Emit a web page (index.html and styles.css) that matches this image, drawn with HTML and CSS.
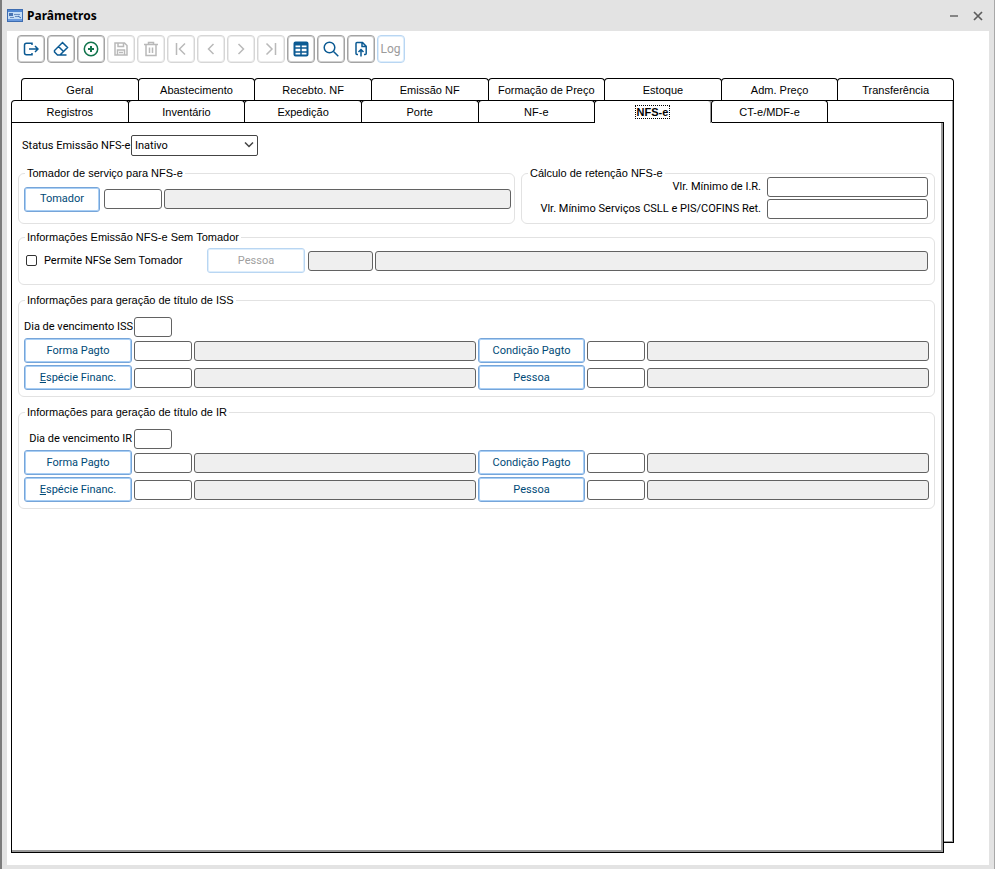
FILE: index.html
```html
<!DOCTYPE html>
<html lang="pt-BR">
<head>
<meta charset="utf-8">
<title>Parâmetros</title>
<link rel="stylesheet" href="styles.css">
</head>
<body>
<div class="window">
  <header class="titlebar">
    <svg class="app-icon" width="16" height="13" viewBox="0 0 16 13">
      <rect x="0.5" y="0.5" width="15" height="12" fill="#c4dcf5" stroke="#3d6cb0"/>
      <rect x="1" y="1" width="14" height="2" fill="#4f86d2"/>
      <rect x="2" y="4" width="4" height="3" fill="#4a74b2"/>
      <path d="M7 5.500h6M3 8.500h4M8 7.500h3" stroke="#6c8fc2"/>
      <path d="M11 7l3 2" stroke="#2f62ae"/>
      <path d="M1 11h14" stroke="#6a9ade" stroke-width="2"/>
    </svg>
    <h1>Parâmetros</h1>
    <button class="win-btn" type="button" aria-label="Minimizar"><svg width="10" height="10" viewBox="0 0 10 10"><path d="M1 5h8" stroke="#858585" stroke-width="2"/></svg></button>
    <button class="win-btn" type="button" aria-label="Fechar"><svg width="10" height="10" viewBox="0 0 10 10"><path d="M1 1l8 8M9 1l-8 8" stroke="#5c5c5c" stroke-width="1.700"/></svg></button>
  </header>
  <main class="client">
    <div class="toolbar" role="toolbar">
      <button type="button" class="tool" aria-label="Sair"><svg viewBox="0 0 16 16"><path d="M9 4V2.200H3.500Q1.500 2.200 1.500 4.200v7.600Q1.500 13.800 3.500 13.800H9V12M6 8h9M12 5l3 3-3 3"/></svg></button>
      <button type="button" class="tool" aria-label="Limpar"><svg viewBox="0 0 16 16"><path d="M9.500 1.500L14.500 6.500L7 14H4.500L1.500 11V9.500ZM5.500 5.500L10.500 10.500M7 14H13.500"/></svg></button>
      <button type="button" class="tool green" aria-label="Incluir"><svg viewBox="0 0 16 16"><circle cx="8" cy="8" r="6.700"/><path d="M8 5v6M5 8h6" stroke-width="2"/></svg></button>
      <button type="button" class="tool" disabled aria-label="Salvar"><svg viewBox="0 0 16 16"><path d="M2 2h9.500L14 4.500V14H2ZM5 2v3.500h5.500V2M4.500 14V9h7v5M6 11.500h4"/></svg></button>
      <button type="button" class="tool" disabled aria-label="Excluir"><svg viewBox="0 0 16 16"><path d="M1 3.500h14M5.500 3V1.500h5V3M3 4v10.500h10V4M6.500 6.500v5.500M9.500 6.500v5.500"/></svg></button>
      <button type="button" class="tool" disabled aria-label="Primeiro"><svg viewBox="0 0 16 16"><path d="M3.500 2v12M12 2.500L6.500 8l5.500 5.500"/></svg></button>
      <button type="button" class="tool" disabled aria-label="Anterior"><svg viewBox="0 0 16 16"><path d="M10.500 3L5.500 8l5 5"/></svg></button>
      <button type="button" class="tool" disabled aria-label="Próximo"><svg viewBox="0 0 16 16"><path d="M5.500 3l5 5-5 5"/></svg></button>
      <button type="button" class="tool" disabled aria-label="Último"><svg viewBox="0 0 16 16"><path d="M3.500 2.500L9 8l-5.500 5.500M12.500 2v12"/></svg></button>
      <button type="button" class="tool" aria-label="Grade"><svg viewBox="0 0 16 16"><rect x="1.500" y="1.500" width="13" height="13" rx="1" stroke-width="2"/><path d="M1 3h14" stroke-width="3"/><path d="M1 7h14M1 11h14M8 4v11"/></svg></button>
      <button type="button" class="tool" aria-label="Pesquisar"><svg viewBox="0 0 16 16"><circle cx="6.500" cy="6.500" r="5.300"/><path d="M10.500 10.500L15.300 15.300"/></svg></button>
      <button type="button" class="tool" aria-label="Exportar"><svg viewBox="0 0 16 16"><path d="M5 13.500H4Q3 13.500 3 12.500V2.500Q3 1.500 4 1.500H9.500L13.200 5.200V12.500Q13.200 13.500 12.200 13.500H11M9 1.500V5.500H13M8 15.500V9M5.500 11L8 8.500L10.500 11"/></svg></button>
      <button type="button" class="tool log" disabled>Log</button>
    </div>

    <div class="notebook">
      <div class="tabs tabs-back" role="tablist">
        <button type="button" role="tab">Geral</button>
        <button type="button" role="tab">Abastecimento</button>
        <button type="button" role="tab">Recebto. NF</button>
        <button type="button" role="tab">Emissão NF</button>
        <button type="button" role="tab">Formação de Preço</button>
        <button type="button" role="tab">Estoque</button>
        <button type="button" role="tab">Adm. Preço</button>
        <button type="button" role="tab">Transferência</button>
      </div>
      <div class="sheet-back"></div>
      <div class="tabs tabs-front" role="tablist">
        <button type="button" role="tab">Registros</button>
        <button type="button" role="tab">Inventário</button>
        <button type="button" role="tab">Expedição</button>
        <button type="button" role="tab">Porte</button>
        <button type="button" role="tab">NF-e</button>
        <button type="button" role="tab" class="selected" aria-selected="true"><span>NFS-e</span></button>
        <button type="button" role="tab">CT-e/MDF-e</button>
      </div>
      <form class="sheet">
        <div class="status">
          <label for="status">Status Emissão NFS-e</label>
          <span class="select-box">
            <select id="status"><option>Inativo</option></select>
            <svg width="10" height="6" viewBox="0 0 10 6"><path d="M1 0.500L5 4.500L9 0.500" fill="none" stroke="#444" stroke-width="1.500"/></svg>
          </span>
        </div>

        <div class="pair">
          <fieldset class="taker">
            <legend>Tomador de serviço para NFS-e</legend>
            <button type="button" class="action">Tomador</button>
            <input type="text" class="code" aria-label="Código do tomador">
            <input type="text" class="grow" readonly aria-label="Nome do tomador">
          </fieldset>
          <fieldset class="retention">
            <legend>Cálculo de retenção NFS-e</legend>
            <label for="ir">Vlr. Mínimo de I.R.</label><input type="text" id="ir">
            <label for="csll">Vlr. Mínimo Serviços CSLL e PIS/COFINS Ret.</label><input type="text" id="csll">
          </fieldset>
        </div>

        <fieldset class="no-taker">
          <legend>Informações Emissão NFS-e Sem Tomador</legend>
          <input type="checkbox" id="permite"><label for="permite">Permite NFSe Sem Tomador</label>
          <button type="button" class="action" disabled>Pessoa</button>
          <input type="text" class="code" readonly aria-label="Código da pessoa">
          <input type="text" class="grow" readonly aria-label="Nome da pessoa">
        </fieldset>

        <fieldset class="title-group">
          <legend>Informações para geração de título de ISS</legend>
          <div class="due"><label for="iss">Dia de vencimento ISS</label><input type="text" id="iss"></div>
          <div class="lookups">
            <button type="button" class="action">Forma Pagto</button><input type="text" aria-label="Forma"><input type="text" readonly aria-label="Descrição da forma">
            <button type="button" class="action">Condição Pagto</button><input type="text" aria-label="Condição"><input type="text" readonly aria-label="Descrição da condição">
            <button type="button" class="action"><u>E</u>spécie Financ.</button><input type="text" aria-label="Espécie"><input type="text" readonly aria-label="Descrição da espécie">
            <button type="button" class="action">Pessoa</button><input type="text" aria-label="Pessoa"><input type="text" readonly aria-label="Nome">
          </div>
        </fieldset>

        <fieldset class="title-group">
          <legend>Informações para geração de título de IR</legend>
          <div class="due"><label for="venc-ir">Dia de vencimento IR</label><input type="text" id="venc-ir"></div>
          <div class="lookups">
            <button type="button" class="action">Forma Pagto</button><input type="text" aria-label="Forma"><input type="text" readonly aria-label="Descrição da forma">
            <button type="button" class="action">Condição Pagto</button><input type="text" aria-label="Condição"><input type="text" readonly aria-label="Descrição da condição">
            <button type="button" class="action"><u>E</u>spécie Financ.</button><input type="text" aria-label="Espécie"><input type="text" readonly aria-label="Descrição da espécie">
            <button type="button" class="action">Pessoa</button><input type="text" aria-label="Pessoa"><input type="text" readonly aria-label="Nome">
          </div>
        </fieldset>
      </form>
    </div>
  </main>
</div>
</body>
</html>
```
FILE: styles.css
```css
* { box-sizing: border-box; }

body {
  margin: 0;
  color: #000;
  font: 11px/14px Roboto, "Liberation Sans", sans-serif;
}

button, input, select { font: inherit; color: inherit; margin: 0; }

.window {
  display: flex;
  flex-direction: column;
  min-height: 100vh;
  padding: 0 5px 4px;
  background: #e3e3e3;
  border-left: 2px solid #7c7c7c;
  border-right: 1px solid #a8a8a8;
}

/* Title bar */
.titlebar {
  display: flex;
  align-items: center;
  height: 31px;
  padding-right: 6px;
}
.titlebar h1 {
  flex: 1;
  margin: 0 0 0 4px;
  font: bold 12px/16px "Noto Sans", sans-serif;
}
.win-btn {
  display: grid;
  place-items: center end;
  width: 24px;
  height: 24px;
  padding: 0;
  border: 0;
  background: none;
}

.client {
  flex: 1;
  display: flex;
  flex-direction: column;
  padding: 4px 35px 12px 4px;
  background: #fff;
}

/* Toolbar */
.toolbar { display: flex; gap: 2px; padding-left: 6px; }
.tool {
  display: grid;
  place-items: center;
  width: 28px;
  height: 28px;
  padding: 0 1px 1px 0;
  background: #fff;
  border: 1px solid #a4a4a4;
  border-radius: 4px;
  box-shadow: inset 0 0 0 1px #d0d0d0;
  color: #0b5a93;
}
.tool svg {
  width: 16px;
  height: 16px;
  fill: none;
  stroke: currentColor;
  stroke-width: 1.5;
}
.tool.green { color: #11744c; }
.tool:disabled {
  border-color: #d6d6d6;
  box-shadow: inset 0 0 0 1px #ececec;
  color: #b9b9b9;
}
.tool.log {
  border-color: #b9d6f2;
  box-shadow: inset 0 0 0 1px #deeefc;
  color: #9b9b9b;
  font-size: 12px;
}

/* Tabbed notebook: a back sheet peeks out behind the front one */
.notebook {
  flex: 1;
  display: grid;
  grid-template-columns: 10px 1fr 10px;
  grid-template-rows: 22px 22px 1fr 10px;
  margin-top: 15px;
}
.tabs {
  display: grid;
  grid-template-columns: repeat(8, 1fr);
  z-index: 1;
  font: 11px/14px "Liberation Sans", sans-serif;
}
.tabs-back { grid-area: 1 / 2 / 2 / 4; }
.tabs-front { grid-area: 2 / 1 / 3 / 3; z-index: 2; }
.tabs button {
  margin-right: -1px;
  padding: 0;
  background: #fff;
  border: 1px solid #000;
  border-bottom: 0;
  border-radius: 4px 4px 0 0;
}
.tabs-back button:last-child { margin-right: 0; }
.tabs .selected {
  margin-bottom: -1px;
  border-right: 2px solid #999;
  font-weight: bold;
}
.selected span { padding: 0 1px; outline: 1px dotted #000; }
.sheet-back {
  grid-area: 2 / 2 / 4 / 4;
  border: 1px solid #000;
  box-shadow: inset -1px -1px #999;
}
.sheet {
  grid-area: 3 / 1 / 5 / 3;
  z-index: 1;
  padding: 12px 8px 12px 6px;
  background: #fff;
  border: 1px solid #000;
  box-shadow: inset -2px -2px #999;
}

/* Form controls */
input[type="text"] {
  width: 100%;
  min-width: 0;
  height: 20px;
  padding: 0 4px;
  background: #fff;
  border: 1px solid #626262;
  border-radius: 3px;
}
input[type="text"]:read-only { background: #efefef; }
input[type="checkbox"] {
  appearance: none;
  width: 11px;
  height: 11px;
  border: 1px solid #333;
  border-radius: 2px;
}
.action {
  height: 25px;
  padding: 0;
  background: #fff;
  border: 1px solid #76a5d9;
  border-radius: 3px;
  box-shadow: inset 0 0 0 1px #a9cff5;
  color: #004a77;
}
.action:disabled {
  border-color: #b9d6f2;
  box-shadow: inset 0 0 0 1px #deeefc;
  color: #a0a0a0;
}

.status {
  display: grid;
  grid-template-columns: 109px 127px;
  align-items: center;
  padding-left: 4px;
  white-space: nowrap;
}
.select-box { position: relative; height: 21px; }
.select-box select {
  appearance: none;
  width: 100%;
  height: 100%;
  padding: 0 3px;
  background: #fff;
  border: 1px solid #444;
  border-radius: 2px;
}
.select-box svg { position: absolute; right: 4px; top: 7px; pointer-events: none; }

fieldset {
  position: relative;
  min-width: 0;
  margin: 0;
  border: 1px solid #e2e2e2;
  border-radius: 6px;
}
legend {
  position: absolute;
  top: -8px;
  left: 6px;
  padding: 0 2px;
  background: #fff;
  font: 11px/14px "Liberation Sans", sans-serif;
}

.pair {
  display: grid;
  grid-template-columns: 497fr 414fr;
  gap: 6px;
  margin-top: 17px;
}
.taker {
  display: flex;
  align-items: center;
  gap: 2px;
  padding: 1px 3px 0 5px;
}
.taker .action { width: 76px; margin-right: 2px; }
.taker .code { width: 58px; }
.retention {
  display: grid;
  grid-template-columns: 1fr 161px;
  gap: 2px 6px;
  align-items: center;
  padding: 3px 6px 4px;
  text-align: right;
  white-space: nowrap;
}

.no-taker {
  display: flex;
  align-items: center;
  gap: 2px;
  margin-top: 13px;
  padding: 10px 6px 11px 7px;
}
.no-taker label { width: 156px; margin-left: 5px; }
.no-taker .action { width: 98px; margin: 0 1px 0 5px; }
.no-taker .code { width: 65px; }
.no-taker .action, .code { flex: none; }
.no-taker .grow, .taker .grow { flex: 1; width: auto; }

.title-group { margin-top: 15px; padding: 16px 5px 6px; }
.due {
  display: grid;
  grid-template-columns: 108px 38px;
  gap: 2px;
  align-items: center;
  margin-bottom: 1px;
  text-align: right;
  white-space: nowrap;
}
.lookups {
  display: grid;
  grid-template-columns: 108px 58px 1fr 107px 58px 1fr;
  gap: 2px;
  align-items: center;
}
```
